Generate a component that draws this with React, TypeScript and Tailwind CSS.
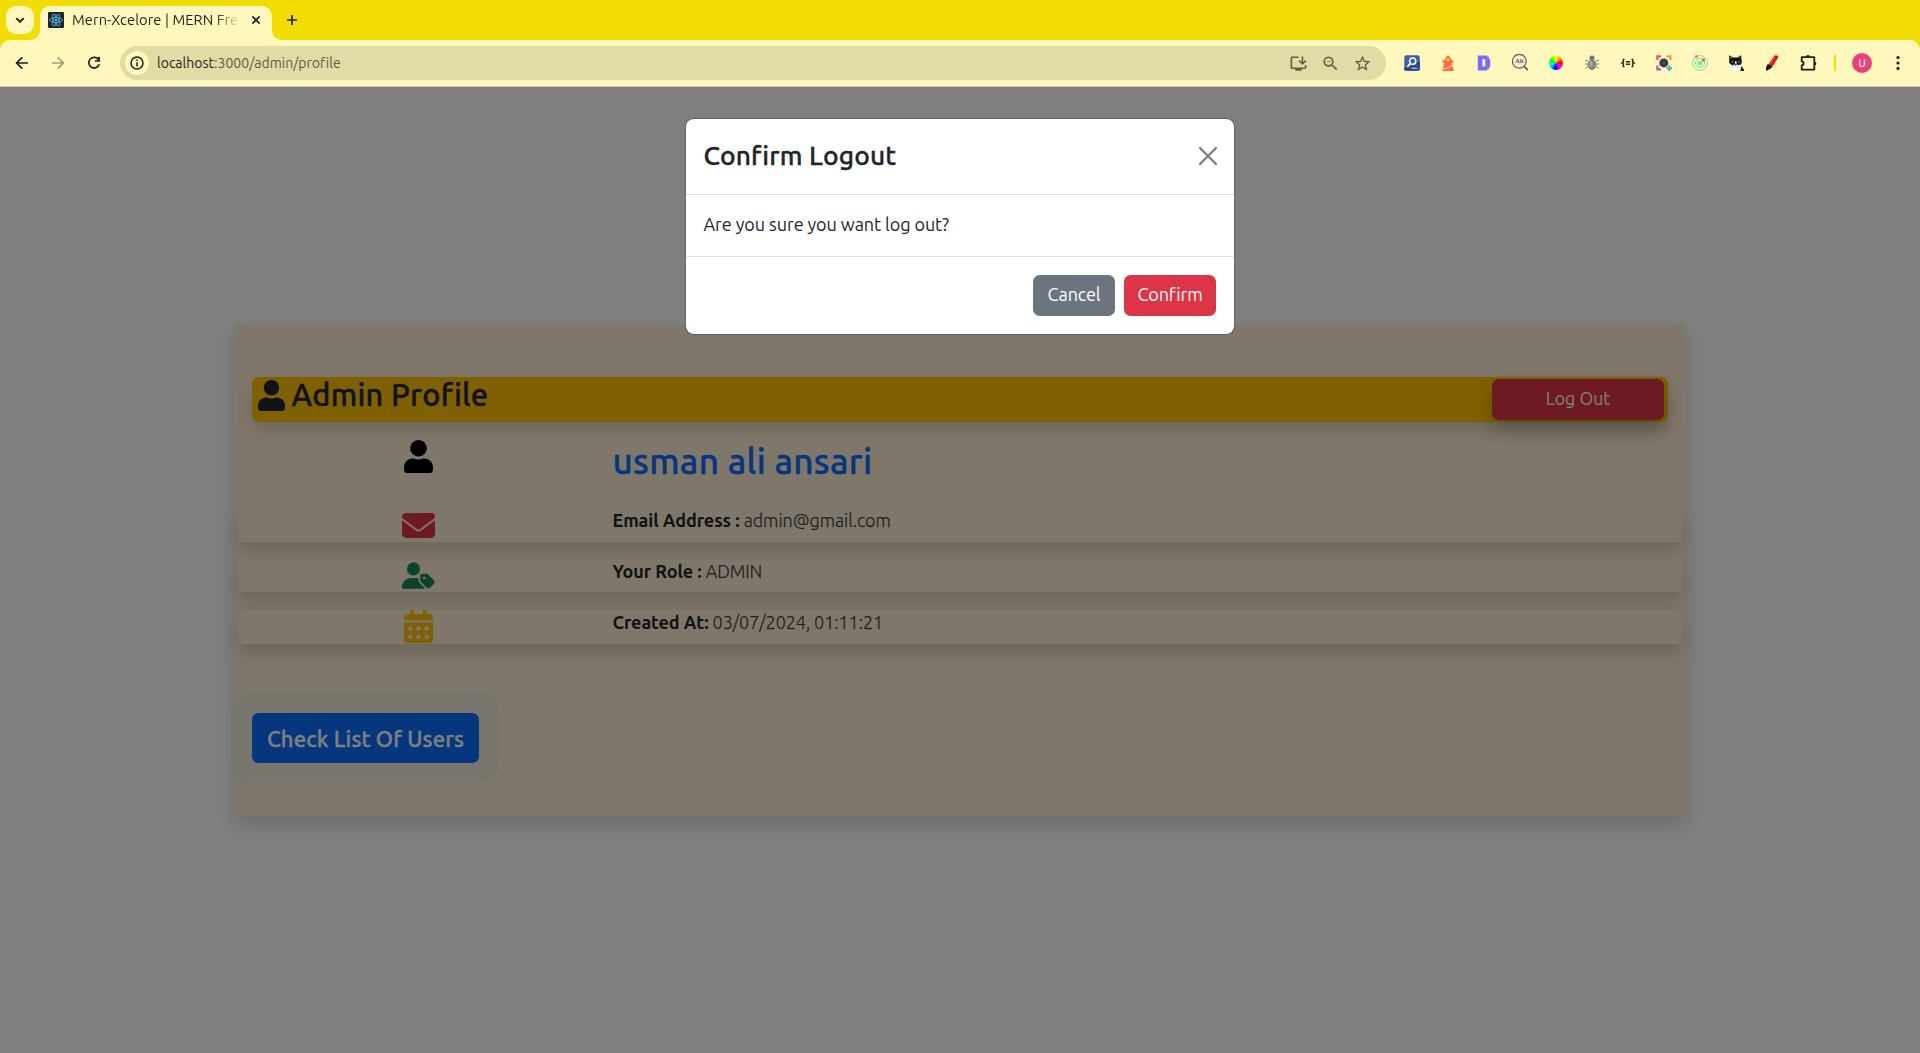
import React from 'react';
import { FaUser } from 'react-icons/fa';
import { FaUserTag, FaCalendarDays, FaEnvelope } from 'react-icons/fa6';
import { MdOutlineInstallDesktop, MdZoomOut, MdStarOutline } from 'react-icons/md';

function ReactLogo() {
  return (
    <svg width="16" height="16" viewBox="0 0 16 16">
      <rect width="16" height="16" rx="1.2" fill="#20232a" />
      <g fill="none" stroke="#55b8d4" strokeWidth=".9">
        <ellipse cx="8" cy="8" rx="6.3" ry="2.5" />
        <ellipse cx="8" cy="8" rx="6.3" ry="2.5" transform="rotate(60 8 8)" />
        <ellipse cx="8" cy="8" rx="6.3" ry="2.5" transform="rotate(120 8 8)" />
      </g>
      <circle cx="8" cy="8" r="1.2" fill="#61dafb" />
    </svg>
  );
}

function TabStrip() {
  return (
    <div className="flex h-10 shrink-0 items-start bg-[#f1dc04] text-[#1f1f1f]">
      <div className="ml-1.5 mt-1.5 flex size-7 items-center justify-center rounded-[10px] bg-[#fff7bb]">
        <svg width="10" height="10" viewBox="0 0 10 10" fill="none" stroke="#1f1f1f" strokeWidth="1.9">
          <path d="M1.3 3.2 5 6.9l3.7-3.7" />
        </svg>
      </div>
      <div className="relative ml-1.5 mt-1.5 flex h-[34px] w-[232px] rounded-t-[10px] bg-[#fff7bb] pl-2">
        <div className="mt-1.5 size-4 shrink-0">
          <ReactLogo />
        </div>
        <div className="ml-2 mt-[3px] w-[168px] shrink-0 overflow-hidden whitespace-nowrap text-[14.67px] leading-[22px] tracking-[0.09px] [mask-image:linear-gradient(to_right,black_143px,transparent_168px)]">
          Mern-Xcelore | MERN Fre
        </div>
        <svg className="ml-3 mt-[10px] shrink-0" width="8" height="8" viewBox="0 0 8 8" stroke="#1f1f1f" strokeWidth="1.7">
          <path d="m.4.4 7.2 7.2M7.6.4.4 7.6" />
        </svg>
        <div className="absolute -left-2.5 bottom-0 size-2.5 bg-[radial-gradient(circle_at_0_0,transparent_9.5px,#fff7bb_10.5px)]" />
        <div className="absolute -right-2.5 bottom-0 size-2.5 bg-[radial-gradient(circle_at_100%_0,transparent_9.5px,#fff7bb_10.5px)]" />
      </div>
      <svg className="ml-[15px] mt-[15px]" width="10" height="10" viewBox="0 0 10 10" stroke="#1f1f1f" strokeWidth="1.7">
        <path d="M5 0v10M0 5h10" />
      </svg>
    </div>
  );
}

const extensions = [
  <svg width="16" height="16" viewBox="0 0 16 16">
    <rect x=".3" y=".3" width="15.4" height="15.4" rx="2.5" fill="#3c5fa6" />
    <path d="M0 13 16 6v7.5a2.2 2.2 0 0 1-2.2 2.2H2.5A2.4 2.4 0 0 1 0 13Z" fill="#2c4b89" />
    <circle cx="8.7" cy="6.2" r="3.1" fill="none" stroke="#fff" strokeWidth="1.5" />
    <path d="m6.4 8.6-3.1 3.2" stroke="#fff" strokeWidth="1.7" />
    <path d="M7.5 13.2h6" stroke="#c8d4ec" strokeWidth="1" />
  </svg>,
  <svg width="16" height="16" viewBox="0 0 16 16">
    <path d="M4.6 4.2 8 0l3.4 4.2v1.2h2.3v2.2h-2L13.8 16H2.2l2.1-8.4h-2V5.4h2.3z" fill="#ff6a3c" />
    <path d="M6.5 3.4h3v2.8h-3z" fill="#ffe84a" />
    <path d="m3.4 13.6 8.9-3.8.3 1.4-9.6 4z" fill="#ffb79f" />
  </svg>,
  <svg width="16" height="16" viewBox="0 0 16 16">
    <path fillRule="evenodd" d="M1.8.4h9.4v1.4H13v2.1h1.2v8.4H13v2H11.2v1.3H1.8zM6.4 4.2v7.4h2.8V4.2z" fill="#7a6cff" />
  </svg>,
  <svg width="18" height="18" viewBox="0 0 18 18">
    <circle cx="8.3" cy="7.2" r="6.9" fill="#f4efc8" stroke="#5e5b4b" strokeWidth="1.2" />
    <path d="m12.8 12 4 4.2" stroke="#5e5b4b" strokeWidth="1.7" />
    <text x="8.4" y="9.4" textAnchor="middle" fontSize="6.6" fontWeight="700" fill="#5e5b4b" fontFamily="Liberation Serif, serif">Alt</text>
  </svg>,
  <div className="size-[14px] rounded-full bg-[conic-gradient(#ff0_0deg,#fa0_30deg,#f50_60deg,#f00_85deg,#f08_105deg,#f0f_130deg,#80f_160deg,#00f_185deg,#06f_210deg,#0cf_235deg,#0fa_260deg,#0f0_300deg,#8f0_335deg,#ff0_360deg)]" />,
  <svg width="16" height="16" viewBox="0 0 16 16">
    <g stroke="#77756b" strokeWidth="1" fill="none">
      <path d="M4.5 6.5 1.2 5.2M4 9H1M4.5 11l-3 2.5M11.5 6.5l3.3-1.3M12 9h3M11.5 11l3 2.5" />
    </g>
    <circle cx="8" cy="3" r="2.6" fill="#77756b" />
    <ellipse cx="8" cy="9.8" rx="4.2" ry="5.2" fill="#85837d" />
    <ellipse cx="7" cy="9" rx="1.6" ry="3" fill="#a9a79f" />
  </svg>,
  <svg width="16" height="16" viewBox="0 0 16 16" fill="none" stroke="#2d2b22" strokeWidth="1.5">
    <path d="M4.5 4.5H3.3v2.7L2 8l1.3.8v2.7h1.2M11.5 4.5h1.2v2.7L14 8l-1.3.8v2.7h-1.2M5.8 6.8h4.4M5.8 9.2h4.4" />
  </svg>,
  <svg width="16" height="16" viewBox="0 0 16 16" fill="none" strokeWidth="2.2">
    <path d="M1.4 5V1.4H5" stroke="#ec4d70" />
    <path d="M10.6 1.4h3.8V5" stroke="#f49a3c" />
    <path d="M1.4 10.5v3.8H5" stroke="#a85cc4" />
    <path d="M13.2 10.4V16M10.4 13.2H16" stroke="#3fb0cf" strokeWidth="2" />
    <circle cx="7.8" cy="7.9" r="4.5" fill="#343b48" />
    <circle cx="7.8" cy="7.9" r="1.4" fill="#4e5a6b" />
  </svg>,
  <svg width="16" height="16" viewBox="0 0 16 16" fill="none" stroke="#5eecae" strokeWidth="1">
    <circle cx="8" cy="8" r="7.4" />
    <circle cx="8" cy="8" r="4.6" />
    <circle cx="8" cy="8.2" r="2.3" fill="#5eecae" stroke="none" />
    <circle cx="4.4" cy="1.7" r="1.6" fill="#ff7a3d" stroke="none" />
    <circle cx="11.4" cy="5" r="1.7" fill="#ff5a36" stroke="none" />
  </svg>,
  <svg width="16" height="16" viewBox="0 0 16 16">
    <path d="M1.2.3 5 2.4h4.4L13 .3l.8 6.5-1 3.4L16 14.6V16h-5L3 12 1.2 8z" fill="#161513" />
    <path d="M.4 7.4 2.2 9l2.6 1.4L6.6 9.2 7.4 6h.8l.6 3.2 1.8 1 2.6-.8v2.8L12.2 16H4.6L3 12.8 1 11z" fill="#fff" />
    <path d="M6.8 8.8h1.8v1.6H6.8zM4.4 11.6l1.4.8M11 11.6l-1.4.8" fill="#555" stroke="#555" strokeWidth=".5" />
    <path d="M3.6 6.2h1.6v1.2H3.6zM10 6.2h1.6v1.2H10z" fill="#9a9a8c" />
    <path d="M2.3 2 3.6 3M11.9 2l-1 1" stroke="#d9a06b" />
  </svg>,
  <svg width="16" height="16" viewBox="0 0 16 16">
    <path d="M10.2.9c.8-1.2 5-.3 3.9 1.7L8.6 11.6l-4.3-2.2z" fill="#ee1010" />
    <path d="m3.8 9 4.7 2.6-1.9 1.9L2.2 16 2 12.6z" fill="#1b1208" />
    <path d="M10.8 2 6.3 9" stroke="#ff5050" strokeWidth="1" />
  </svg>,
  <svg width="18" height="18" viewBox="0 0 18 18">
    <path d="M2.7 3.2h12.6v12.4H2.7v-4.2c2.6-.3 2.6-3.7 0-4z" fill="none" stroke="#1f1f1f" strokeWidth="1.8" strokeLinejoin="round" />
    <path d="M7 3a2 2 0 0 1 4 0zM15.4 7.4a2 2 0 0 1 0 4z" fill="#1f1f1f" />
  </svg>,
];

function Toolbar() {
  return (
    <div className="h-[47px] shrink-0 bg-[#f1dc04]">
      <div className="flex h-full items-center rounded-t-[10px] border-b border-[#d3cd9c] bg-[#fff7bb] pl-1">
        <div className="flex w-[108px] shrink-0">
          <div className="flex w-9 justify-center">
            <svg width="14" height="14" viewBox="0 0 14 14" fill="none" stroke="#1f1f1f" strokeWidth="1.7">
              <path d="M13 7H2M7.2 1.4 1.6 7l5.6 5.6" />
            </svg>
          </div>
          <div className="flex w-9 justify-center">
            <svg width="14" height="14" viewBox="0 0 14 14" fill="none" stroke="#a19c78" strokeWidth="1.7">
              <path d="M1 7h11M6.8 1.4 12.4 7l-5.6 5.6" />
            </svg>
          </div>
          <div className="flex w-9 justify-center">
            <svg width="14" height="14" viewBox="0 0 14 14" fill="none" stroke="#1f1f1f" strokeWidth="1.7">
              <path d="M11.6 3.8A5.3 5.3 0 1 0 12.2 8.2M12.1 .8v4.2H8" />
            </svg>
          </div>
        </div>
        <div className="ml-2 flex h-[34px] w-[1266px] shrink-0 items-center rounded-full bg-[#e1dba6] pl-[5px] pr-[14px]">
          <div className="flex size-6 items-center justify-center rounded-full bg-[#fff7bb]">
            <svg width="14" height="14" viewBox="0 0 14 14" fill="none" stroke="#1f1f1f" strokeWidth="1.5">
              <circle cx="7" cy="7" r="6" />
              <path d="M7 6.2v4.2M7 3.6v1.5" />
            </svg>
          </div>
          <div className="ml-2 text-[14px] leading-5 tracking-[0.01px] text-[#5d5a47]">
            <span className="text-[#1f1f1f]">localhost</span>:3000/admin/profile
          </div>
          <div className="ml-auto flex items-center gap-[13px] text-[#5f5d4a]">
            <MdOutlineInstallDesktop size={19} />
            <MdZoomOut size={19} />
            <MdStarOutline size={19} />
          </div>
        </div>
        <div className="ml-2 flex shrink-0 items-center">
          {extensions.map((icon, i) => (
            <div key={i} className="flex w-9 justify-center">
              {icon}
            </div>
          ))}
        </div>
        <div className="ml-2 h-4 w-0.5 bg-[#f1dc04]" />
        <div className="ml-4 flex size-5 items-center justify-center rounded-full bg-[#ec407a] pt-px font-['Roboto',sans-serif] text-[11px] leading-none text-white">
          U
        </div>
        <svg className="ml-6" width="4" height="14" viewBox="0 0 4 14" fill="#1f1f1f">
          <circle cx="2" cy="1.6" r="1.6" />
          <circle cx="2" cy="7" r="1.6" />
          <circle cx="2" cy="12.4" r="1.6" />
        </svg>
      </div>
    </div>
  );
}

const details = [
  { icon: <FaEnvelope size={33} className="mt-0.5" />, tint: 'text-[#dc3545]', label: 'Email Address :', value: 'admin@gmail.com', row: 'mb-[17px]' },
  { icon: <FaUserTag size={33} />, tint: 'text-[#198754]', label: 'Your Role :', value: 'ADMIN', row: 'mb-[18px]' },
  { icon: <FaCalendarDays size={33} />, tint: 'text-[#ffc107]', label: 'Created At:', value: '03/07/2024, 01:11:21', row: '' },
];

function ProfileCard() {
  return (
    <div className="mx-auto h-[492px] w-[1452px] rounded-[6.6px] bg-[#ffefd5] pt-[53px] shadow-[0_9px_18px_rgba(0,10,20,0.15)]">
      <div className="mx-[18px] flex h-[45px] justify-between rounded-[6.6px] bg-[#ffc107] pl-[6px] pr-1 pt-0.5 shadow-[0_9px_18px_rgba(0,50,20,0.15)]">
        <h3 className="flex items-start text-[30.8px] font-medium leading-[37px] tracking-[0.2px] [-webkit-text-stroke:0.35px]">
          <FaUser size={31} className="mt-px w-[27px]" strokeWidth={0} />
          <span className="-mt-[3px] ml-[6.5px]">Admin Profile</span>
        </h3>
        <button className="h-[41px] w-[172px] rounded-[6.6px] bg-[#dc3545] pb-0.5 text-[17.8px] leading-[26.4px] text-white shadow-[0_9px_18px_rgba(0,20,0,0.25)]">
          Log Out
        </button>
      </div>
      <div className="mx-1 mt-[18px] flex h-[68px]">
        <div className="flex w-[361px] justify-center text-black">
          <FaUser size={33} />
        </div>
        <h2 className="pl-[13.5px] text-[35.2px] font-medium leading-[42px] tracking-[0.27px] text-[#0d6efd] [-webkit-text-stroke:0.4px]">
          usman ali ansari
        </h2>
      </div>
      <div className="mx-1">
        {details.map((item) => (
          <div key={item.label} className={'flex h-[33.5px] bg-[#ffefd5] shadow-[0_9px_18px_rgba(0,50,20,0.17)] ' + item.row}>
            <div className={'flex w-[361px] items-center justify-center ' + item.tint}>{item.icon}</div>
            <div className="pl-[13.5px] text-[18px] leading-[24.4px] tracking-[-0.07px]">
              <span className="font-bold">{item.label}</span>{' '}
              <span className="font-light text-[#212529]/85 [-webkit-text-stroke:0.25px]">{item.value}</span>
            </div>
          </div>
        ))}
      </div>
      <div className="ml-[18px] mt-[69px]">
        <button className="h-[50px] w-[227px] rounded-[6.6px] bg-[#0d6efd] pt-0.5 text-[22px] font-medium tracking-[0.14px] text-white shadow-[0_0_0_20.5px_rgba(100,200,255,0.1)] [-webkit-text-stroke:0.3px]">
          Check List Of Users
        </button>
      </div>
    </div>
  );
}

function LogoutDialog() {
  return (
    <div className="absolute inset-0 bg-black/50 pt-[31px]">
      <div className="mx-auto w-[550px] rounded-[8.8px] border border-black/20 bg-white bg-clip-padding">
        <div className="flex h-[76px] items-center justify-between border-b border-[#dee2e6] pb-px pl-[17.5px] pr-[17px]">
          <h4 className="text-[26.4px] font-medium leading-[39.6px] tracking-[0.12px] [-webkit-text-stroke:0.35px]">Confirm Logout</h4>
          <svg width="18" height="18" viewBox="0 0 16 16" fill="#000" opacity=".5">
            <path d="M.293.293a1 1 0 0 1 1.414 0L8 6.586 14.293.293a1 1 0 1 1 1.414 1.414L9.414 8l6.293 6.293a1 1 0 0 1-1.414 1.414L8 9.414l-6.293 6.293a1 1 0 0 1-1.414-1.414L6.586 8 .293 1.707a1 1 0 0 1 0-1.414z" />
          </svg>
        </div>
        <div className="h-[61px] px-[17.5px] pt-4 text-[18px] leading-[26.4px] tracking-[-0.08px]">Are you sure you want log out?</div>
        <div className="flex h-[78px] items-center justify-end gap-[9px] border-t border-[#dee2e6] pr-[18px] text-[18px] leading-[26.4px] tracking-[-0.12px] text-white">
          <button className="h-[41px] w-[82px] rounded-[6.6px] bg-[#6c757d] pb-[3px]">Cancel</button>
          <button className="h-[41px] w-[92px] rounded-[6.6px] bg-[#dc3545] pb-[3px]">Confirm</button>
        </div>
      </div>
    </div>
  );
}

export default function App() {
  return (
    <div className="flex h-[1053px] w-[1920px] flex-col overflow-hidden bg-white font-['Ubuntu','Noto_Sans',sans-serif] text-[#212529]">
      <TabStrip />
      <Toolbar />
      <main className="relative flex-1 bg-white pt-[237px]">
        <ProfileCard />
        <LogoutDialog />
      </main>
    </div>
  );
}
